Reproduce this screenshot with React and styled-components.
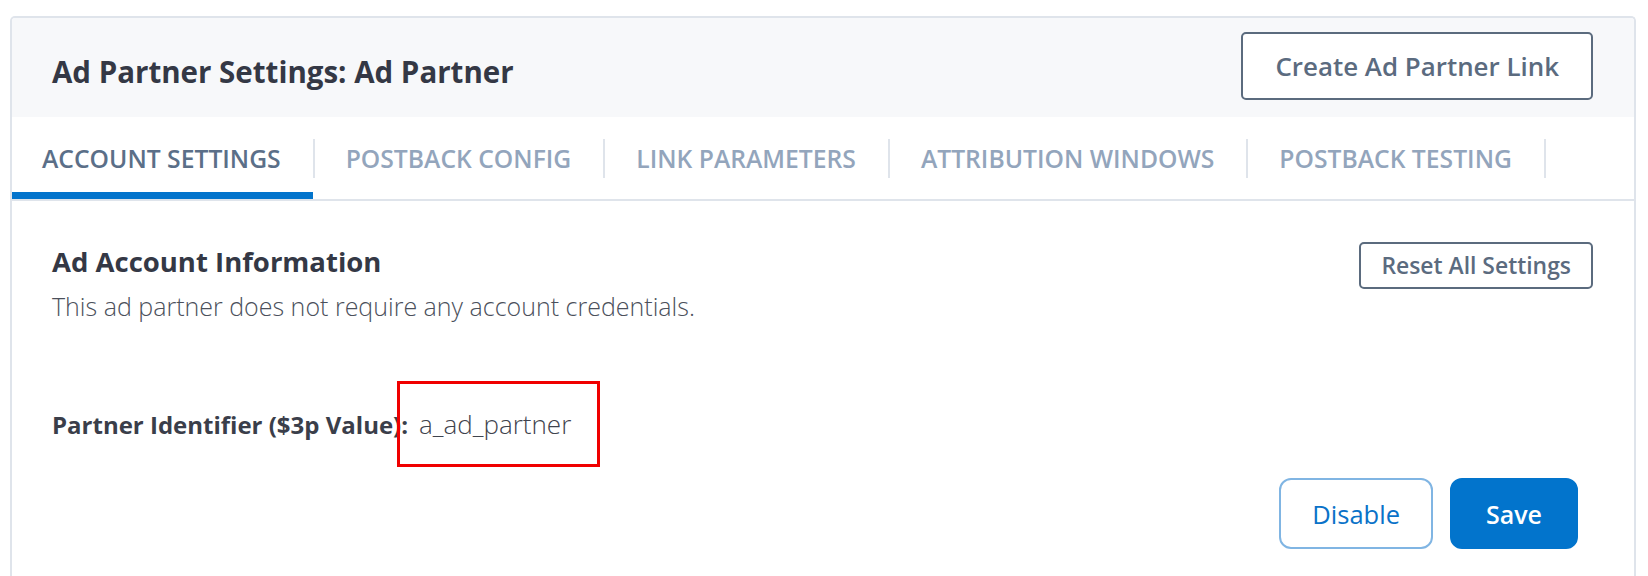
import React from 'react';
import styled, { createGlobalStyle } from 'styled-components';

const GlobalStyle = createGlobalStyle`
  html, body {
    margin: 0;
    background: #fff;
    font-family: "Open Sans", "Liberation Sans", sans-serif;
  }
`;

const tabs = [
  { key: 'account', label: 'Account Settings' },
  { key: 'postback', label: 'Postback Config' },
  { key: 'link', label: 'Link Parameters' },
  { key: 'attribution', label: 'Attribution Windows' },
  { key: 'testing', label: 'Postback Testing' },
];

const Card = styled.section`
  box-sizing: border-box;
  height: calc(100vh - 16px);
  margin: 16px 12px 0 10px;
  border: 2px solid #dfe4eb;
  border-bottom: none;
  border-radius: 5px 5px 0 0;
  overflow: hidden;
`;

const Header = styled.header`
  height: 99px;
  padding: 0 41px 0 40px;
  display: flex;
  align-items: center;
  justify-content: space-between;
  background-color: #f7f8fa;
`;

const Title = styled.h1`
  margin: 8px 0 0;
  font-size: 29.5px;
  font-weight: 700;
  color: #343845;
`;

const OutlineButton = styled.button`
  height: ${p => p.$height}px;
  margin-bottom: ${p => p.$lift || 0}px;
  padding: 0 ${p => p.$pad}px;
  border: 2px solid #5b6b7e;
  border-radius: 5px;
  background: #fff;
  color: #5b6b7f;
  font-family: inherit;
  font-size: ${p => p.$size}px;
  font-weight: 600;
  cursor: pointer;
`;

const TabBar = styled.nav`
  display: flex;
  align-items: stretch;
  height: 82px;
  border-bottom: 2px solid #dfe4eb;
`;

const Tab = styled.div`
  display: flex;
  align-items: center;
  padding: 0 32px 0 31px;
  font-size: 24.7px;
  font-weight: 600;
  text-transform: uppercase;
  color: ${p => (p.$active ? '#5b6f88' : '#93a5bc')};
  box-shadow: ${p => (p.$active ? 'inset 0 -7px 0 #0374cc' : 'none')};
  cursor: pointer;

  &:first-child {
    padding-left: 30px;
  }
`;

const Divider = styled.span`
  align-self: center;
  width: 2px;
  height: 39px;
  background-color: #dfe4eb;
`;

const Body = styled.div`
  padding: 41px 41px 0 40px;
`;

const SectionHead = styled.div`
  display: flex;
  justify-content: space-between;
  align-items: flex-start;
`;

const Heading = styled.h2`
  margin: 1px 0 0;
  font-size: 27.5px;
  font-weight: 700;
  color: #343845;
`;

const Description = styled.p`
  margin: 9px 0 0;
  font-size: 25px;
  font-weight: 300;
  color: #4b505b;
`;

const FieldRow = styled.div`
  display: flex;
  align-items: baseline;
  margin-top: 83px;
`;

const FieldLabel = styled.span`
  font-size: 24px;
  font-weight: 700;
  color: #3a3e4a;
`;

const FieldValue = styled.span`
  position: relative;
  margin-left: 11px;
  font-size: 26px;
  font-weight: 300;
  color: #3f434d;
`;

const Highlight = styled.span`
  position: absolute;
  top: -25px;
  bottom: -25px;
  left: -22px;
  right: -29px;
  border: 3px solid #f00000;
  pointer-events: none;
`;

const Footer = styled.div`
  display: flex;
  justify-content: flex-end;
  gap: 17px;
  margin: 36px 15px 0 0;
`;

const ActionButton = styled.button`
  height: 71px;
  padding: 0 ${p => (p.$primary ? 34 : 31)}px;
  border: 2px solid ${p => (p.$primary ? '#0274cc' : '#80b5e3')};
  border-radius: 12px;
  background-color: ${p => (p.$primary ? '#0274cc' : '#fff')};
  color: ${p => (p.$primary ? '#fff' : '#0a72c8')};
  font-family: inherit;
  font-size: ${p => (p.$primary ? 25 : 25.5)}px;
  font-weight: ${p => (p.$primary ? 600 : 400)};
  cursor: pointer;
`;

const App = () => {
  const [activeTab, setActiveTab] = React.useState('account');

  return (
    <>
      <GlobalStyle />
      <Card>
        <Header>
          <Title>Ad Partner Settings: Ad Partner</Title>
          <OutlineButton $height={68} $pad={32} $size={25.9} $lift={4}>Create Ad Partner Link</OutlineButton>
        </Header>
        <TabBar>
          {tabs.map(tab => (
            <React.Fragment key={tab.key}>
              <Tab $active={tab.key === activeTab} onClick={() => setActiveTab(tab.key)}>
                {tab.label}
              </Tab>
              <Divider />
            </React.Fragment>
          ))}
        </TabBar>
        <Body>
          <SectionHead>
            <div>
              <Heading>Ad Account Information</Heading>
              <Description>This ad partner does not require any account credentials.</Description>
            </div>
            <OutlineButton $height={47} $pad={20} $size={22.9}>Reset All Settings</OutlineButton>
          </SectionHead>
          <FieldRow>
            <FieldLabel>Partner Identifier ($3p Value):</FieldLabel>
            <FieldValue>
              a_ad_partner
              <Highlight />
            </FieldValue>
          </FieldRow>
          <Footer>
            <ActionButton>Disable</ActionButton>
            <ActionButton $primary>Save</ActionButton>
          </Footer>
        </Body>
      </Card>
    </>
  );
};

export default App;
